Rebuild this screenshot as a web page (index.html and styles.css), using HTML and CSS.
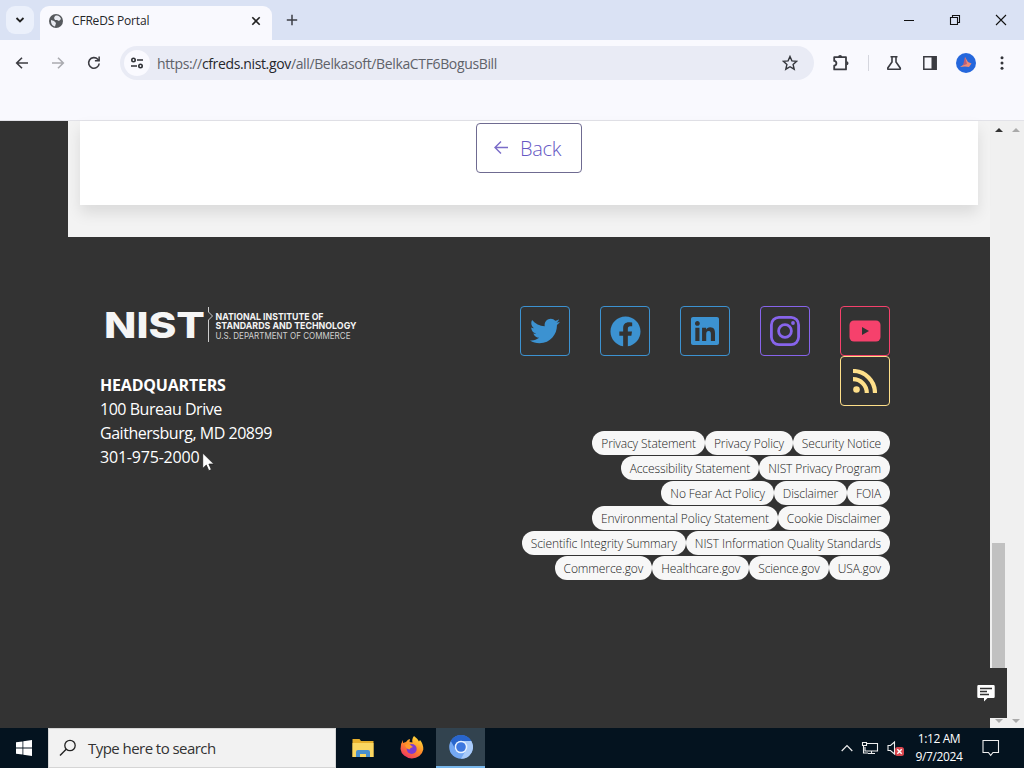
FILE: index.html
```html
<!DOCTYPE html>
<html lang="en">
<head>
  <meta charset="utf-8">
  <title>CFReDS Portal</title>
  <link rel="stylesheet" href="styles.css">
</head>
<body>

<!-- tab strip -->
<div class="tabstrip">
  <div class="tab-search"><svg width="10" height="10" viewBox="0 0 10 10"><path d="M1.500 3l3.500 3.500L8.500 3" fill="none" stroke="#222" stroke-width="1.800"/></svg></div>
  <div class="tab">
    <svg width="14" height="14" viewBox="0 0 14 14"><circle cx="7" cy="7" r="7" fill="#56595d"/><path d="M2 6l3 1 2 2-1 3.500C3.500 12 1.700 9.500 2 6zM6 2c3-1.200 5 .5 6 3L10 7 8 6H6l-1-2z" fill="#e9ebf2"/></svg>
    <span class="tab-title">CFReDS Portal</span>
    <svg width="10" height="10" viewBox="0 0 10 10"><path d="M1.300 1.300l7.400 7.400M8.700 1.300L1.300 8.700" stroke="#222" stroke-width="1.600"/></svg>
  </div>
  <svg class="new-tab" width="12" height="12" viewBox="0 0 12 12"><path d="M6 .8v10.400M.8 6h10.400" stroke="#3c3e44" stroke-width="1.500"/></svg>
  <div class="window-buttons">
    <svg width="12" height="12" viewBox="0 0 12 12"><path d="M1 6.500h10" stroke="#111"/></svg>
    <svg width="12" height="12" viewBox="0 0 12 12"><path d="M1.500 3.500h7v7h-7zM3.500 3.500v-2h7v7h-2" fill="none" stroke="#111" stroke-width="1.100"/></svg>
    <svg width="12" height="12" viewBox="0 0 12 12"><path d="M1 1l10 10M11 1L1 11" stroke="#111" stroke-width="1.100"/></svg>
  </div>
</div>

<!-- toolbar -->
<div class="toolbar">
  <svg class="nav" width="14" height="14" viewBox="0 0 14 14"><path d="M13 7H2M7 1.700L1.700 7 7 12.300" fill="none" stroke="#3c3c42" stroke-width="1.600"/></svg>
  <svg class="nav" width="14" height="14" viewBox="0 0 14 14"><path d="M1 7h11M7 1.700L12.300 7 7 12.300" fill="none" stroke="#aaabb0" stroke-width="1.600"/></svg>
  <svg class="nav" width="14" height="14" viewBox="0 0 14 14"><path d="M12.200 7.500A5.300 5.300 0 1 1 10.800 3.300L12 4.600" fill="none" stroke="#3c3c42" stroke-width="1.600"/><path d="M12.900.6v5H7.900V4.100h3.500V.6z" fill="#3c3c42"/></svg>
  <div class="omnibox">
    <div class="site-info"><svg width="14" height="12" viewBox="0 0 14 12"><g fill="none" stroke="#2f3136" stroke-width="1.600"><circle cx="3.500" cy="3" r="1.700"/><path d="M7 3h6M1 9h6"/><circle cx="10.500" cy="9" r="1.700"/></g></svg></div>
    <span class="url">https://<b>cfreds.nist.gov</b>/all/Belkasoft/BelkaCTF6BogusBill</span>
    <svg width="16" height="16" viewBox="0 0 16 16"><path d="M8 1.500l1.900 4.400 4.800.4-3.600 3.200 1.100 4.700L8 11.700l-4.200 2.500 1.100-4.700L1.300 6.300l4.800-.4z" fill="none" stroke="#34363c" stroke-width="1.400"/></svg>
  </div>
  <div class="actions">
    <svg width="18" height="18" viewBox="0 0 18 18"><path d="M2.200 3.200H14v12.200H2.200v-3.700q2.200-.2 2.200-2.400T2.200 6.900z" fill="none" stroke="#3a3b41" stroke-width="1.800" stroke-linejoin="round"/><path d="M6.100 3a2 2 0 0 1 4 0zM14.500 7.200a2 2 0 0 1 0 4z" fill="#3a3b41"/></svg>
    <i class="divider"></i>
    <svg width="16" height="16" viewBox="0 0 16 16"><path d="M3.500 1.700h7M5 2v5l-4.200 6q-.5 1.300.8 1.300h10.800q1.300 0 .8-1.300L9 7V2" fill="none" stroke="#3a3b41" stroke-width="1.600"/></svg>
    <svg width="16" height="16" viewBox="0 0 16 16"><path d="M1.800 1.800h12.400v12.400H1.800z" fill="none" stroke="#3a3b41" stroke-width="1.500"/><path d="M9.500 1.500H14v13H9.500z" fill="#3a3b41"/></svg>
    <svg width="20" height="20" viewBox="0 0 20 20"><circle cx="10" cy="10" r="10" fill="#2567dc"/><path d="M9 4l3 5 3.500 1.500L13 14l-4-.5-5 .5 4.500-3z" fill="#ed8b77"/><path d="M9 4l2 7-4 1.500z" fill="#ba5f78"/></svg>
    <svg width="16" height="16" viewBox="0 0 16 16"><g fill="#33353a"><circle cx="8" cy="2.800" r="1.500"/><circle cx="8" cy="8" r="1.500"/><circle cx="8" cy="13.200" r="1.500"/></g></svg>
  </div>
</div>

<!-- page -->
<div class="viewport">
  <div class="page">
    <main class="content">
      <section class="card">
        <a class="back"><svg width="16" height="16" viewBox="0 0 16 16"><path d="M15 7.500H2M8 1.500l-6 6 6 6" fill="none" stroke="#7a6cc8" stroke-width="1.400"/></svg>Back</a>
      </section>
    </main>
    <footer class="footer">
      <div class="about">
        <svg class="nist" width="280" height="40" viewBox="0 0 280 40">
          <g fill="#f5f5f5" font-family="Inter, sans-serif">
            <text x="4" y="33" font-size="36" font-weight="800" textLength="101" lengthAdjust="spacingAndGlyphs">NIST</text>
            <g font-size="9.600">
              <text x="115.500" y="15" font-weight="700" textLength="108" lengthAdjust="spacingAndGlyphs">NATIONAL INSTITUTE OF</text>
              <text x="115.500" y="24.300" font-weight="700" textLength="141" lengthAdjust="spacingAndGlyphs">STANDARDS AND TECHNOLOGY</text>
              <text x="115.500" y="34" fill="#d0d0d0" textLength="135" lengthAdjust="spacingAndGlyphs">U.S. DEPARTMENT OF COMMERCE</text>
            </g>
          </g>
          <path d="M108.500 2v5l4 4-4 4v22" fill="none" stroke="#ccc"/>
        </svg>
        <address>
          <strong>HEADQUARTERS</strong><br>
          100 Bureau Drive<br>
          Gaithersburg, MD 20899<br>
          <span class="phone">301-975-2000</span>
        </address>
      </div>
      <div class="links">
        <div class="social">
          <a class="blue"><svg width="30" height="30" viewBox="0 0 512 512"><path fill="currentColor" d="M459.370 151.716c.325 4.548.325 9.097.325 13.645 0 138.720-105.583 298.558-298.558 298.558-59.452 0-114.680-17.219-161.137-47.106 8.447.974 16.568 1.299 25.340 1.299 49.055 0 94.213-16.568 130.274-44.832-46.132-.975-84.792-31.188-98.112-72.772 6.498.974 12.995 1.624 19.818 1.624 9.421 0 18.843-1.300 27.614-3.573-48.081-9.747-84.143-51.980-84.143-102.985v-1.299c13.969 7.797 30.214 12.670 47.431 13.319-28.264-18.843-46.781-51.005-46.781-87.391 0-19.492 5.197-37.360 14.294-52.954 51.655 63.675 129.300 105.258 216.365 109.807-1.624-7.797-2.599-15.918-2.599-24.040 0-57.828 46.782-104.934 104.934-104.934 30.213 0 57.502 12.670 76.670 33.137 23.715-4.548 46.456-13.320 66.599-25.340-7.798 24.366-24.366 44.833-46.132 57.827 21.117-2.273 41.584-8.122 60.426-16.243-14.292 20.791-32.161 39.308-52.628 54.253z"/></svg></a>
          <a class="blue"><svg width="31" height="31" viewBox="0 0 512 512"><path fill="currentColor" d="M504 256C504 119 393 8 256 8S8 119 8 256c0 123.780 90.690 226.380 209.250 245V327.690h-63V256h63v-54.640c0-62.150 37-96.480 93.670-96.480 27.140 0 55.520 4.840 55.520 4.840v61h-31.280c-30.800 0-40.410 19.120-40.410 38.730V256h68.780l-11 71.690h-57.780V501C413.310 482.380 504 379.780 504 256z"/></svg></a>
          <a class="blue"><svg width="28" height="32" viewBox="0 0 448 512"><path fill="currentColor" d="M416 32H31.900C14.300 32 0 46.500 0 64.300v383.400C0 465.500 14.300 480 31.900 480H416c17.600 0 32-14.500 32-32.300V64.300c0-17.800-14.400-32.300-32-32.300zM135.400 416H69V202.200h66.500V416zm-33.200-243c-21.300 0-38.500-17.300-38.500-38.500S80.900 96 102.200 96c21.200 0 38.500 17.300 38.500 38.500 0 21.300-17.200 38.500-38.500 38.500zm282.100 243h-66.400V312c0-24.800-.5-56.700-34.500-56.700-34.600 0-39.900 27-39.900 54.900V416h-66.400V202.200h63.700v29.200h.9c8.900-16.800 30.600-34.500 62.900-34.500 67.200 0 79.700 44.300 79.700 101.900V416z"/></svg></a>
          <a class="purple"><svg width="32" height="32" viewBox="0 0 32 32"><g fill="none" stroke="currentColor" stroke-width="2.800"><rect x="2.400" y="2.400" width="27.200" height="27.200" rx="7.500"/><circle cx="16" cy="16" r="6.400"/></g><circle cx="24" cy="8" r="1.900" fill="currentColor"/></svg></a>
          <a class="red"><svg width="32" height="22" viewBox="0 0 32 22"><rect x=".5" y=".5" width="31" height="21" rx="4.500" fill="currentColor"/><path d="M13 7l7 4-7 4z" fill="#333"/></svg></a>
          <a class="yellow"><svg width="24" height="24" viewBox="0 0 24 24"><circle cx="3.500" cy="20.500" r="3.300" fill="currentColor"/><path d="M0 10.200A13.800 13.800 0 0 1 13.800 24M0 2A22 22 0 0 1 22 24" fill="none" stroke="currentColor" stroke-width="4.200"/></svg></a>
        </div>
        <div class="pills">
          <a>Privacy Statement</a><a>Privacy Policy</a><a>Security Notice</a>
          <a>Accessibility Statement</a><a>NIST Privacy Program</a>
          <a>No Fear Act Policy</a><a>Disclaimer</a><a>FOIA</a>
          <a>Environmental Policy Statement</a><a>Cookie Disclaimer</a>
          <a>Scientific Integrity Summary</a><a>NIST Information Quality Standards</a>
          <a>Commerce.gov</a><a>Healthcare.gov</a><a>Science.gov</a><a>USA.gov</a>
        </div>
      </div>
    </footer>
  </div>
  <div class="scrollbar inner"><i class="up"></i><i class="thumb"></i><i class="down"></i></div>
  <div class="scrollbar outer"><i class="up"></i><i class="down"></i></div>
  <div class="feedback"><svg width="18" height="18" viewBox="0 0 18 18"><path d="M1.500 1h15q1.200 0 1.200 1.200v10.600q0 1.200-1.200 1.200H10.500L7 17.500V14H1.500Q.3 14 .3 12.800V2.200Q.3 1 1.500 1z" fill="#fff"/><path d="M3 4.500h12M3 7.500h7M3 10.500h9" stroke="#333" stroke-width="1.300"/></svg></div>
  <svg class="cursor" width="13" height="20" viewBox="0 0 13 20"><path d="M.7 1v15.500l3.600-3.400 2.500 5.600 2.600-1.100-2.500-5.500h5z" fill="#fff" stroke="#222" stroke-width=".8"/></svg>
</div>

<!-- taskbar -->
<div class="taskbar">
  <div class="start"><svg width="16" height="16" viewBox="0 0 16 16"><path d="M0 2.300l6.500-.9v6.200H0zM7.300 1.300L16 0v7.600H7.300zM0 8.400h6.500v6.200L0 13.700zM7.300 8.400H16V16l-8.700-1.200z" fill="#fff"/></svg></div>
  <div class="search"><svg width="18" height="18" viewBox="0 0 18 18"><circle cx="11" cy="6.500" r="5.200" fill="none" stroke="#222" stroke-width="1.300"/><path d="M7.200 10.300L1 16.500" stroke="#222" stroke-width="1.400"/></svg><span>Type here to search</span></div>
  <div class="apps">
    <div><svg width="22" height="20" viewBox="0 0 22 20"><path d="M.5 1h7l1.500 2h12.500v16H.5z" fill="#e8b02c"/><path d="M.5 5h21v14H.5z" fill="#fbd762"/><path d="M4 19v-5q0-2 2-2h10q2 0 2 2v5h-4v-3H8v3z" fill="#4a90cf"/></svg></div>
    <div><svg width="24" height="24" viewBox="0 0 24 24"><defs><linearGradient id="fire" x1=".8" y1="0" x2=".2" y2="1"><stop offset="0" stop-color="#ffe23c"/><stop offset=".5" stop-color="#ff8a28"/><stop offset="1" stop-color="#f02d68"/></linearGradient></defs><path d="M14 0q4 3 5 5.500l1-1.500q3.500 4 3.300 9.500A11.500 10.500 0 0 1 .5 13Q.2 8 3 4v3l3-1q2-3 4-3l-.5 3 3 .5Q11.500 3 14 0z" fill="url(#fire)"/><circle cx="11.700" cy="13" r="5" fill="#7c3bd0"/><path d="M5 9q4-2 6 .5l2 1.500q-3 .5-3.500 2.500Q6 13 5 9z" fill="#ff9a2b"/></svg></div>
    <div class="active"><svg width="24" height="24" viewBox="0 0 24 24"><circle cx="12" cy="12" r="11.800" fill="#74a8f3"/><path d="M1.800 6A11.800 11.800 0 0 1 22.300 6H12a6 6 0 0 0-5.300 8.500z" fill="#2865cc"/><path d="M22.300 6A11.800 11.800 0 0 1 12 23.800l5.200-9A6 6 0 0 0 12 6z" fill="#a9cbfa"/><circle cx="12" cy="12" r="6.300" fill="#e9f2ff"/><circle cx="12" cy="12" r="4.800" fill="#3d77df"/></svg></div>
  </div>
  <div class="tray">
    <svg width="12" height="8" viewBox="0 0 12 8"><path d="M.7 7L6 1.500 11.300 7" fill="none" stroke="#eee" stroke-width="1.200"/></svg>
    <svg width="18" height="16" viewBox="0 0 18 16"><path d="M5 3.500h11.500v7.500H4V7M1.500 2.500h4v3h-4zM2.500 6v7H7M7 13.500h7M10.500 11v2.500" fill="none" stroke="#eee" stroke-width="1.100"/></svg>
    <svg width="18" height="16" viewBox="0 0 18 16"><path d="M1 5.500h2.500L7.500 2v12l-4-3.500H1z" fill="none" stroke="#eee" stroke-width="1.100"/><rect x="8" y="7" width="9" height="9" rx="2.500" fill="#d9464e"/><path d="M10.300 9.300l4.400 4.400M14.700 9.300l-4.400 4.400" stroke="#fff" stroke-width="1.400"/></svg>
    <div class="clock">1:12 AM<br>9/7/2024</div>
    <svg width="18" height="18" viewBox="0 0 18 18"><path d="M1 1.500h15.500v12H11L8.700 16.300 6.400 13.500H1z" fill="none" stroke="#eee" stroke-width="1.100"/></svg>
  </div>
</div>

</body>
</html>
```
FILE: styles.css
```css
* {
  box-sizing: border-box;
}

body {
  margin: 0;
  height: 768px;
  display: flex;
  flex-direction: column;
  overflow: hidden;
  font-family: "Open Sans", "Noto Sans", sans-serif;
}

svg {
  display: block;
  flex: none;
}

/* browser chrome */
.tabstrip {
  height: 40px;
  flex: none;
  display: flex;
  align-items: center;
  padding-left: 6px;
  background: #dae2f4;
}

.tab-search {
  width: 28px;
  height: 28px;
  display: flex;
  align-items: center;
  justify-content: center;
  border-radius: 9px;
  background: #ebf0fb;
}

.tab {
  width: 232px;
  height: 34px;
  margin: 6px 0 0 6px;
  padding: 0 11px 5px 9px;
  display: flex;
  align-items: center;
  border-radius: 9px 9px 0 0;
  background: #f9f9fe;
}

.tab-title {
  flex: 1;
  margin-left: 9px;
  font-size: 12px;
  letter-spacing: -0.18px;
  color: #252629;
}

.new-tab {
  margin-left: 14px;
}

.window-buttons {
  margin-left: auto;
  padding-right: 17px;
  display: flex;
  gap: 34px;
}

.toolbar {
  height: 81px;
  flex: none;
  display: flex;
  align-items: flex-start;
  padding: 6px 14px 0 15px;
  background: #f9f9fe;
  border-bottom: 1px solid #e2e2e8;
}

.nav {
  margin: 10px 22px 0 0;
}

.omnibox {
  width: 694px;
  height: 34px;
  margin-left: -3px;
  padding: 0 16px 0 4px;
  display: flex;
  align-items: center;
  border-radius: 17px;
  background: #e9ebf5;
}

.site-info {
  width: 26px;
  height: 26px;
  display: flex;
  align-items: center;
  justify-content: center;
  border-radius: 50%;
  background: #fafaff;
}

.url {
  flex: 1;
  margin-left: 7px;
  font-size: 14px;
  letter-spacing: -0.36px;
  color: #5f6269;
}

.url b {
  font-weight: normal;
  color: #25272c;
}

.actions {
  flex: 1;
  height: 34px;
  margin-left: 18px;
  display: flex;
  align-items: center;
  justify-content: space-between;
}

.divider {
  width: 1px;
  height: 16px;
  background: #d5d6de;
}

/* page */
.viewport {
  position: relative;
  height: 607px;
  flex: none;
  display: flex;
  background: #f0f0f0;
}

.page {
  width: 990px;
  display: flex;
  flex-direction: column;
  background: #333;
}

.content {
  height: 116px;
  margin-left: 68px;
  padding: 0 12px 32px;
  background: #f3f3f3;
}

.card {
  height: 84px;
  padding-top: 2px;
  display: flex;
  justify-content: center;
  align-items: flex-start;
  background: #fff;
  box-shadow: 0 8px 14px rgba(0, 0, 0, 0.1);
}

.back {
  width: 106px;
  height: 50px;
  padding-left: 16px;
  display: flex;
  align-items: center;
  gap: 11px;
  border: 1px solid #6f6b91;
  border-radius: 4px;
  font-size: 20px;
  font-weight: 300;
  letter-spacing: -0.3px;
  color: #6658c4;
}

.footer {
  flex: 1;
  display: flex;
  justify-content: space-between;
  padding: 68px 100px 0;
  color: #fff;
}

.about {
  width: 280px;
}

address {
  margin-top: 28px;
  font-size: 16px;
  font-style: normal;
  line-height: 24px;
  letter-spacing: -0.47px;
}

address strong,
.phone {
  letter-spacing: -0.2px;
}

.links {
  width: 373px;
}

.social {
  margin-top: 1px;
  display: flex;
  flex-wrap: wrap;
  justify-content: flex-end;
  column-gap: 30px;
}

.social a {
  width: 50px;
  height: 50px;
  display: flex;
  align-items: center;
  justify-content: center;
  border: 1px solid;
  border-radius: 4px;
}

.blue { color: #3c92d1; }
.purple { color: #8764eb; }
.red { color: #f6416c; }
.yellow { color: #ffe08a; }

.pills {
  margin-top: 25px;
  display: flex;
  flex-wrap: wrap;
  justify-content: flex-end;
  row-gap: 1px;
}

.pills a {
  height: 24px;
  padding: 0 9px;
  border-radius: 12px;
  background: #f7f7f7;
  font-size: 12px;
  font-weight: 300;
  line-height: 25px;
  letter-spacing: -0.1px;
  white-space: nowrap;
  color: #222;
}

/* scrollbars */
.scrollbar {
  width: 17px;
  padding: 7px 0 5px;
  display: flex;
  flex-direction: column;
  align-items: center;
  color: #333;
}

.scrollbar .up {
  border: 4px solid transparent;
  border-top: 0;
  border-bottom-color: currentColor;
}

.scrollbar .down {
  margin-top: auto;
  border: 4px solid transparent;
  border-bottom: 0;
  border-top-color: #aaa;
}

.outer {
  color: #aaa;
}

.thumb {
  width: 13px;
  height: 126px;
  margin-top: 411px;
  background: #c1c1c1;
}

.feedback {
  position: absolute;
  right: 17px;
  bottom: 10px;
  width: 46px;
  height: 50px;
  padding-left: 4px;
  display: flex;
  align-items: center;
  justify-content: center;
  background: #333;
}

.cursor {
  position: absolute;
  left: 202px;
  top: 331px;
}

/* taskbar */
.taskbar {
  height: 40px;
  flex: none;
  display: flex;
  background: #04131f;
  color: #fff;
}

.start {
  width: 48px;
  display: flex;
  align-items: center;
  justify-content: center;
}

.search {
  width: 288px;
  padding-left: 10px;
  display: flex;
  align-items: center;
  gap: 11px;
  border: 1px solid #d5d5d5;
  background: #f2f2f2;
  color: #333;
  font-size: 15px;
  letter-spacing: -0.55px;
}

.apps {
  margin-left: 2px;
  display: flex;
}

.apps div {
  width: 49px;
  display: flex;
  align-items: center;
  justify-content: center;
}

.apps .active {
  background: #32434f;
  border-bottom: 2px solid #78b7ec;
}

.tray {
  margin-left: auto;
  padding-right: 24px;
  display: flex;
  align-items: center;
}

.tray svg + svg {
  margin-left: 8px;
}

.clock {
  width: 56px;
  margin: 0 15px 0 6px;
  font-size: 12px;
  line-height: 18px;
  letter-spacing: -0.4px;
  text-align: center;
  white-space: nowrap;
}
```
